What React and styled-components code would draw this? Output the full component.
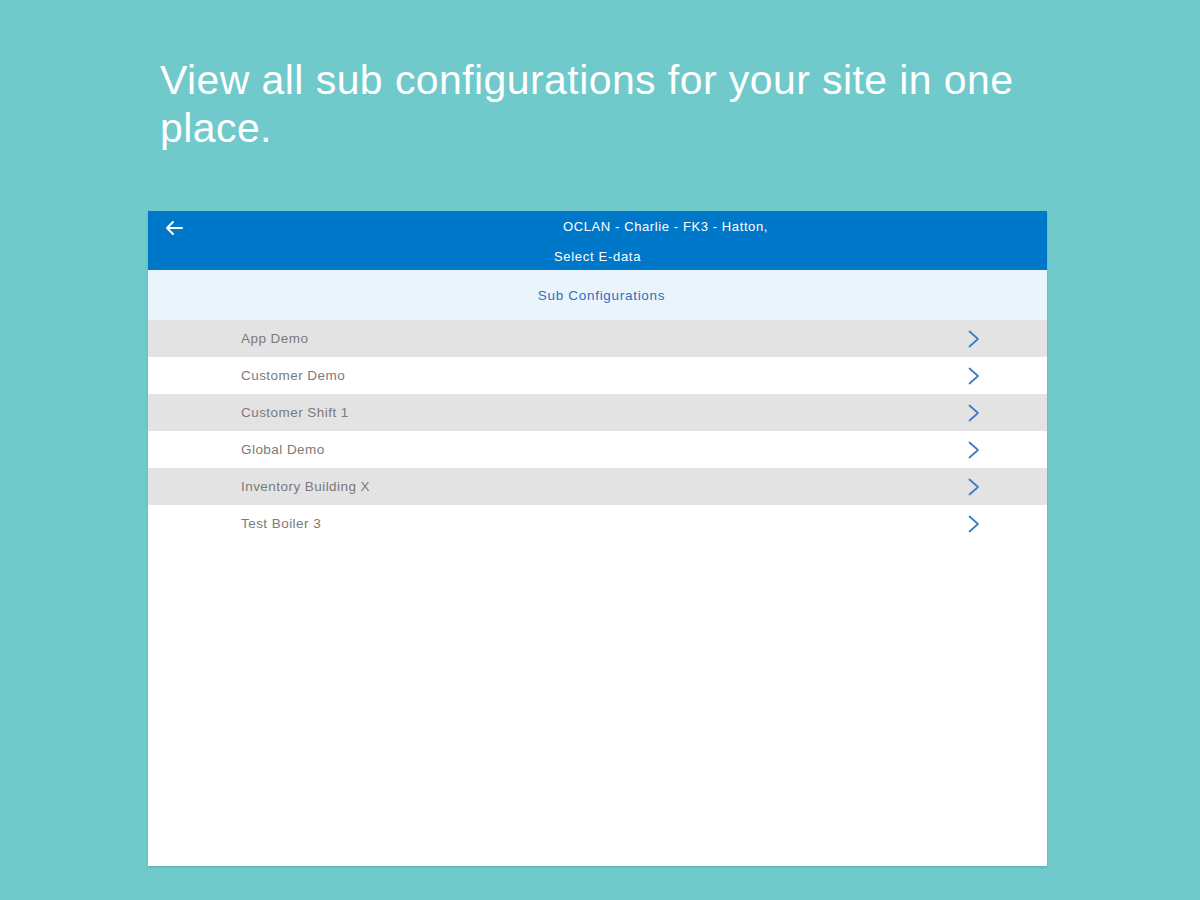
import React from "react";
import styled, { createGlobalStyle } from "styled-components";

const Global = createGlobalStyle`
  html, body { margin: 0; padding: 0; }
  body { background: #70c9ca; font-family: "Liberation Sans", Arial, sans-serif; }
`;

const Page = styled.div`
  width: 1200px;
  height: 900px;
  box-sizing: border-box;
  padding: 56px 0 0 148px;
  display: flex;
  flex-direction: column;
`;

const Headline = styled.h1`
  margin: 0 0 0 12px;
  width: 900px;
  font-family: "Liberation Sans", Arial, sans-serif;
  font-weight: 400;
  font-size: 41px;
  letter-spacing: 0.42px;
  line-height: 48px;
  color: #ffffff;
`;

const Panel = styled.div`
  margin-top: 59px;
  width: 899px;
  height: 655px;
  background: #ffffff;
  display: flex;
  flex-direction: column;
  box-shadow: 0 1px 2px rgba(0, 90, 120, 0.25);
`;

const Header = styled.div`
  position: relative;
  height: 59px;
  background: #0078c9;
  color: #ffffff;
  display: flex;
  flex-direction: column;
  align-items: center;
  font-size: 13px;
  letter-spacing: 0.6px;
`;

const BackButton = styled.div`
  position: absolute;
  left: 16px;
  top: 8px;
  width: 20px;
  height: 18px;
  display: flex;
  align-items: center;
  justify-content: center;
`;

const Title = styled.div`
  margin-top: 8px;
  padding-left: 136px;
  line-height: 15px;
`;

const SubTitle = styled.div`
  margin-top: 15px;
  line-height: 15px;
  letter-spacing: 0.7px;
`;

const Section = styled.div`
  height: 50px;
  background: #eaf5fb;
  color: #2f6fc0;
  font-size: 13.5px;
  letter-spacing: 0.7px;
  display: flex;
  align-items: center;
  justify-content: center;
  padding-left: 8px;
`;

const List = styled.div`
  display: flex;
  flex-direction: column;
`;

const Row = styled.div`
  height: 37px;
  background: ${(p) => (p.$shaded ? "#e3e3e3" : "#ffffff")};
  display: flex;
  align-items: center;
  padding: 0 66px 0 93px;
`;

const Label = styled.span`
  flex: 1;
  color: #7a7a7a;
  font-size: 13.5px;
  letter-spacing: 0.45px;
`;

const Chevron = () => (
  <svg width="14" height="18" viewBox="0 0 14 18" fill="none">
    <path d="M2.5 1.5 L11 9 L2.5 16.5" stroke="#3b7dc6" strokeWidth="1.8" strokeLinecap="round" strokeLinejoin="round" />
  </svg>
);

const BackArrow = () => (
  <svg width="20" height="16" viewBox="0 0 20 16" fill="none">
    <path d="M18 8 H3 M9 2 L3 8 L9 14" stroke="#ffffff" strokeWidth="2" strokeLinecap="round" strokeLinejoin="round" />
  </svg>
);

const items = [
  "App Demo",
  "Customer Demo",
  "Customer Shift 1",
  "Global Demo",
  "Inventory Building X",
  "Test Boiler 3",
];

export default function App() {
  return (
    <>
      <Global />
      <Page>
        <Headline>View all sub configurations for your site in one place.</Headline>
        <Panel>
          <Header>
            <BackButton>
              <BackArrow />
            </BackButton>
            <Title>OCLAN - Charlie - FK3 - Hatton,</Title>
            <SubTitle>Select E-data</SubTitle>
          </Header>
          <Section>Sub Configurations</Section>
          <List>
            {items.map((it, i) => (
              <Row key={it} $shaded={i % 2 === 0}>
                <Label>{it}</Label>
                <Chevron />
              </Row>
            ))}
          </List>
        </Panel>
      </Page>
    </>
  );
}
